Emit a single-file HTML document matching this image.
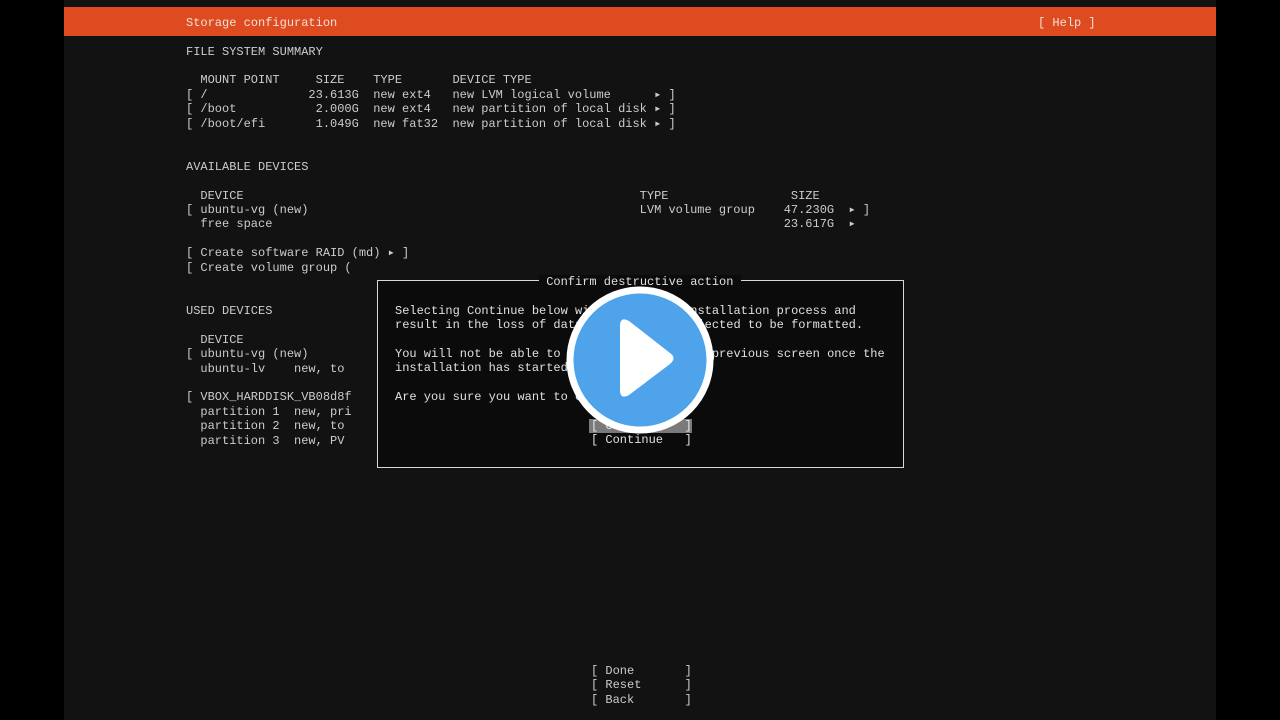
<!DOCTYPE html>
<html><head><meta charset="utf-8"><style>
html,body{margin:0;padding:0;background:#000;width:1280px;height:720px;overflow:hidden}
#term{position:absolute;left:64px;top:0;width:1152px;height:720px;background:#121212}
.t{position:absolute;margin:0;font-family:"Liberation Mono",monospace;font-size:12px;line-height:14.4px;color:#cccccc;white-space:pre}
#hdr{position:absolute;left:64px;top:7px;width:1152px;height:29px;background:#df4b20}
#dlg{position:absolute;left:377px;top:280px;width:525px;height:186px;border:1px solid #d8d8d8;background:#0b0b0b}
</style></head><body>
<div id="term"></div>
<div id="hdr"></div>
<pre class="t" style="left:186px;top:15.5px;color:#f4e0d6">Storage configuration</pre>
<pre class="t" style="left:1038px;top:15.5px;color:#f4e0d6">[ Help ]</pre>
<pre class="t" style="left:186px;top:44.6px">FILE SYSTEM SUMMARY

  MOUNT POINT     SIZE    TYPE       DEVICE TYPE
[ /              23.613G  new ext4   new LVM logical volume      ▸ ]
[ /boot           2.000G  new ext4   new partition of local disk ▸ ]
[ /boot/efi       1.049G  new fat32  new partition of local disk ▸ ]


AVAILABLE DEVICES

  DEVICE                                                       TYPE                 SIZE
[ ubuntu-vg (new)                                              LVM volume group    47.230G  ▸ ]
  free space                                                                       23.617G  ▸

[ Create software RAID (md) ▸ ]
[ Create volume group (


USED DEVICES

  DEVICE
[ ubuntu-vg (new)
  ubuntu-lv    new, to

[ VBOX_HARDDISK_VB08d8f
  partition 1  new, pri
  partition 2  new, to
  partition 3  new, PV</pre>
<div id="dlg"></div>
<pre class="t" style="left:539px;top:275px;background:#0b0b0b;color:#e0e0e0"> Confirm destructive action </pre>
<pre class="t" style="left:395px;top:303.8px;color:#e0e0e0">Selecting Continue below will begin the installation process and
result in the loss of data on the disks selected to be formatted.

You will not be able to return to this or a previous screen once the
installation has started.

Are you sure you want to continue?</pre>
<pre class="t" style="left:589px;top:419px;background:#7a7a7a;color:#e8e8e8;padding-left:2px">[ Cancel     ]</pre>
<pre class="t" style="left:591px;top:433.4px;color:#e0e0e0">[ Continue   ]</pre>
<pre class="t" style="left:591px;top:663.8px">[ Done       ]
[ Reset      ]
[ Back       ]</pre>
<svg style="position:absolute;left:560px;top:280px" width="160" height="160" viewBox="0 0 160 160">
<circle cx="80" cy="80" r="70" fill="#4ea3ea" stroke="#fff" stroke-width="7"/>
<path d="M60 46 Q60 36 69 41 L110 73 Q117 78 110 84 L69 115 Q60 120 60 110 Z" fill="#fff"/>
</svg>
</body></html>
